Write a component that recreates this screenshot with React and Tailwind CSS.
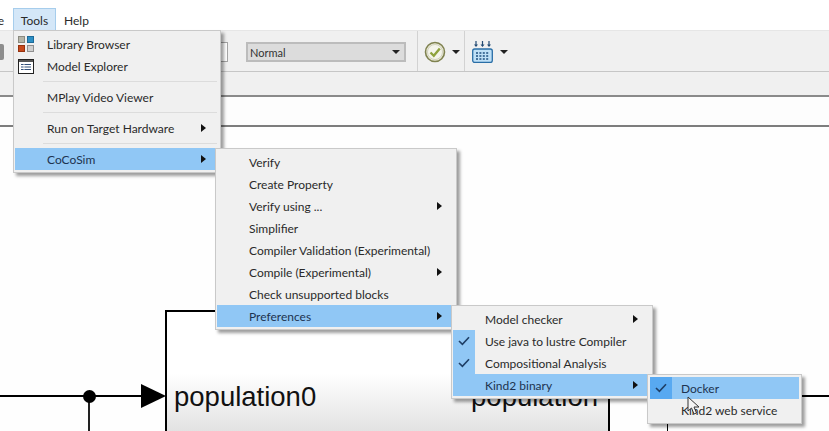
import React from 'react';

const font = "font-['Lato',sans-serif]";

function Arrow() {
    return (
        <svg width="5" height="8" viewBox="0 0 5 8" className="ml-auto mr-[12px] shrink-0">
            <path d="M0 0L5 4L0 8Z" fill="#111"/>
        </svg>
    );
}

function Check() {
    return (
        <svg width="12" height="10" viewBox="0 0 12 10">
            <path d="M1 5L4.4 8.4L11 1.2" fill="none" stroke="#1f3f66" strokeWidth="1.6"/>
        </svg>
    );
}

function LibraryIcon() {
    return (
        <div className="grid grid-cols-2 gap-[2px] w-[16px]">
            <div className="h-[7px] bg-[#b5b5a8] border border-[#8a8a80]"/>
            <div className="h-[7px] bg-[#2d8fc4] border border-[#1c6a99]"/>
            <div className="h-[7px] bg-[#c8491c] border border-[#96320f]"/>
            <div className="h-[7px] bg-[#cfcfcf] border border-[#8f8f8f]"/>
        </div>
    );
}

function ExplorerIcon() {
    return (
        <svg width="16" height="15" viewBox="0 0 16 15">
            <rect x="0.5" y="0.5" width="15" height="14" fill="#fff" stroke="#222"/>
            <rect x="1" y="1" width="14" height="2" fill="#555"/>
            <path d="M3 5.5H13M3 8H13M3 10.5H13" stroke="#33507a" strokeWidth="1.2"/>
            <path d="M6 4V12" stroke="#fff" strokeWidth="0.8"/>
        </svg>
    );
}

function Row({item, labelLeft}) {
    return (
        <div className={`flex items-center h-[22px] relative ${item.active ? "bg-[#90c7f5] text-[#1d3350]" : ""}`}>
            <div className={`flex items-center justify-center h-[22px] w-[22px] ${item.checked ? item.checked : ""}`}>
                {item.checked && <Check/>}
                {item.icon}
            </div>
            <span className={`absolute mt-[2px] whitespace-nowrap ${labelLeft}`}>{item.label}</span>
            {item.sub && <Arrow/>}
        </div>
    );
}

function Menu({items, className, labelLeft = "left-[32px]"}) {
    return (
        <div className={`absolute bg-[#f0f0f0] border border-[#c9c9c9] p-[2px] pl-[1px] shadow-[3px_3px_3px_rgba(0,0,0,0.38)] text-[12px] text-[#2a2a2a] ${className}`}>
            {items.map((item, index) => item.sep
                ? <div key={index} className="h-[9px] flex items-center pl-[28px] pr-[1px]">
                    <div className="h-px w-full bg-[#dcdcdc]"/>
                </div>
                : <Row key={index} item={item} labelLeft={labelLeft}/>)}
        </div>
    );
}

const toolsItems = [
    {label: "Library Browser", icon: <LibraryIcon/>},
    {label: "Model Explorer", icon: <ExplorerIcon/>},
    {sep: true},
    {label: "MPlay Video Viewer"},
    {sep: true},
    {label: "Run on Target Hardware", sub: true},
    {sep: true},
    {label: "CoCoSim", sub: true, active: true},
];

const cocosimItems = [
    {label: "Verify"},
    {label: "Create Property"},
    {label: "Verify using ...", sub: true},
    {label: "Simplifier"},
    {label: "Compiler Validation (Experimental)"},
    {label: "Compile (Experimental)", sub: true},
    {label: "Check unsupported blocks"},
    {label: "Preferences", sub: true, active: true},
];

const prefItems = [
    {label: "Model checker", sub: true},
    {label: "Use java to lustre Compiler", checked: "bg-[#90c7f5]"},
    {label: "Compositional Analysis", checked: "bg-[#90c7f5]"},
    {label: "Kind2 binary", sub: true, active: true},
];

const kindItems = [
    {label: "Docker", active: true, checked: "bg-[#58a9f1]"},
    {label: "Kind2 web service"},
];

function Caret() {
    return (
        <svg width="8" height="4" viewBox="0 0 8 4" className="shrink-0">
            <path d="M0 0H8L4 4Z" fill="#222"/>
        </svg>
    );
}

function CheckIcon() {
    return (
        <svg width="22" height="22" viewBox="0 0 22 22" className="shrink-0">
            <circle cx="11" cy="11" r="9.5" fill="#ecebd8" stroke="#7f8250" strokeWidth="1.6"/>
            <circle cx="11" cy="11" r="7.5" fill="#f4f4ea" stroke="#c9c9b5" strokeWidth="0.8"/>
            <path d="M6.5 11.5L9.8 14.8L15.8 7.6" fill="none" stroke="#8ea23c" strokeWidth="2.4"/>
        </svg>
    );
}

function KeyboardIcon() {
    return (
        <svg width="21" height="22" viewBox="0 0 21 22" className="shrink-0">
            <path d="M4 0V5M10.5 0V5M17 0V5" stroke="#234a73" strokeWidth="1.2"/>
            <path d="M2 3.5L4 6L6 3.5ZM8.5 3.5L10.5 6L12.5 3.5ZM15 3.5L17 6L19 3.5Z" fill="#234a73"/>
            <rect x="0.7" y="8" width="19.6" height="13.5" rx="2" fill="#bfe0f7" stroke="#2a6ea6" strokeWidth="1.3"/>
            <path d="M4 12H17M4 15H17M4 18H17" stroke="#1f4f80" strokeWidth="1.6" strokeDasharray="2 1.4"/>
        </svg>
    );
}

export default function App() {
    return (
        <div className={`w-[829px] h-[431px] relative overflow-hidden bg-white flex flex-col ${font}`}>
            <div className="h-[30px] flex items-end text-[12px] text-[#2a2a2a] shrink-0">
                <div className="w-[13px] h-[21px] flex justify-end items-center pr-[9px] pt-[2px]">e</div>
                <div className="w-[43px] h-[22px] bg-[#d4e7f8] border border-[#a6cdec] border-b-0 flex items-center justify-center pt-[3px]">Tools</div>
                <div className="h-[22px] flex items-center ml-[8px] pt-[3px]">Help</div>
            </div>

            <div className="h-[42px] shrink-0 bg-[#f0f0f0] border-t border-[#e6e6e6] border-b border-b-[#c6c6c6] flex items-stretch">
                <div className="w-[4px] h-[16px] bg-[#8d8d8d] rounded-r-[2px] self-center mt-[1px]"/>
                <div className="ml-[216px] w-[8px] h-[20px] bg-white border border-l-0 border-[#a5a5a5] self-center mt-[2px]"/>
                <div className="ml-[18px] w-[160px] h-[20px] self-center mt-[2px] bg-[#dcdcdc] border-2 border-[#bcbcbc] flex items-center pl-[2px] pr-[4px] text-[11px] text-[#333]">
                    <span className="mt-[2px]">Normal</span>
                    <div className="ml-auto"><Caret/></div>
                </div>
                <div className="ml-[11px] w-px bg-[#d2d2d2]"/>
                <div className="ml-[6px] mt-[2px] flex items-center gap-[6px]">
                    <CheckIcon/>
                    <Caret/>
                </div>
                <div className="ml-[4px] w-px bg-[#d2d2d2]"/>
                <div className="ml-[7px] mt-[2px] flex items-center gap-[7px]">
                    <KeyboardIcon/>
                    <Caret/>
                </div>
            </div>

            <div className="h-[25px] shrink-0 bg-[#f0f0f0] border-b-2 border-[#8a8a8a]"/>
            <div className="h-[30px] shrink-0 bg-[#fdfdfd] border-b-2 border-[#7d7d7d]"/>

            <div className="flex-1 relative bg-[#fefefe]">
                <div className="absolute left-0 top-[268px] w-[142px] h-[2px] bg-black"/>
                <div className="absolute left-[88px] top-[269px] w-[2px] h-[40px] bg-[#222]"/>
                <div className="absolute left-[83px] top-[263px] w-[13px] h-[13px] rounded-full bg-black"/>
                <svg width="25" height="24" viewBox="0 0 25 24" className="absolute left-[141px] top-[257px]">
                    <path d="M0 0L25 12L0 24Z" fill="#000"/>
                </svg>
                <div className="absolute left-[165px] top-[183px] w-[445px] h-[130px] border-2 border-black border-b-0 bg-linear-to-b from-white from-[48%] to-[#dedede] font-['Liberation_Sans',sans-serif] text-[27.5px] text-[#111] leading-none">
                    <span className="absolute left-[7px] top-[71px]">population0</span>
                    <span className="absolute right-[10px] top-[71px]">population</span>
                </div>
                <div className="absolute left-[800px] top-[268px] w-[29px] h-[2px] bg-black"/>
                <div className="absolute left-[667px] top-[290px] w-[1px] h-[20px] bg-black"/>
            </div>

            <Menu items={toolsItems} className="left-[13px] top-[30px] w-[208px]"/>
            <Menu items={cocosimItems} className="left-[215px] top-[148px] w-[242px]"/>
            <Menu items={prefItems} className="left-[451px] top-[305px] w-[202px]"/>
            <Menu items={kindItems} className="left-[647px] top-[374px] w-[155px] !pl-[2px]" labelLeft="left-[31px]"/>

            <svg width="14" height="20" viewBox="0 0 14 20" className="absolute left-[687px] top-[396px]">
                <path d="M1 1V15L4.5 12L7 18L9.5 17L7 11H12Z" fill="#f4f4f4" stroke="#333" strokeWidth="1"/>
            </svg>
        </div>
    );
}
